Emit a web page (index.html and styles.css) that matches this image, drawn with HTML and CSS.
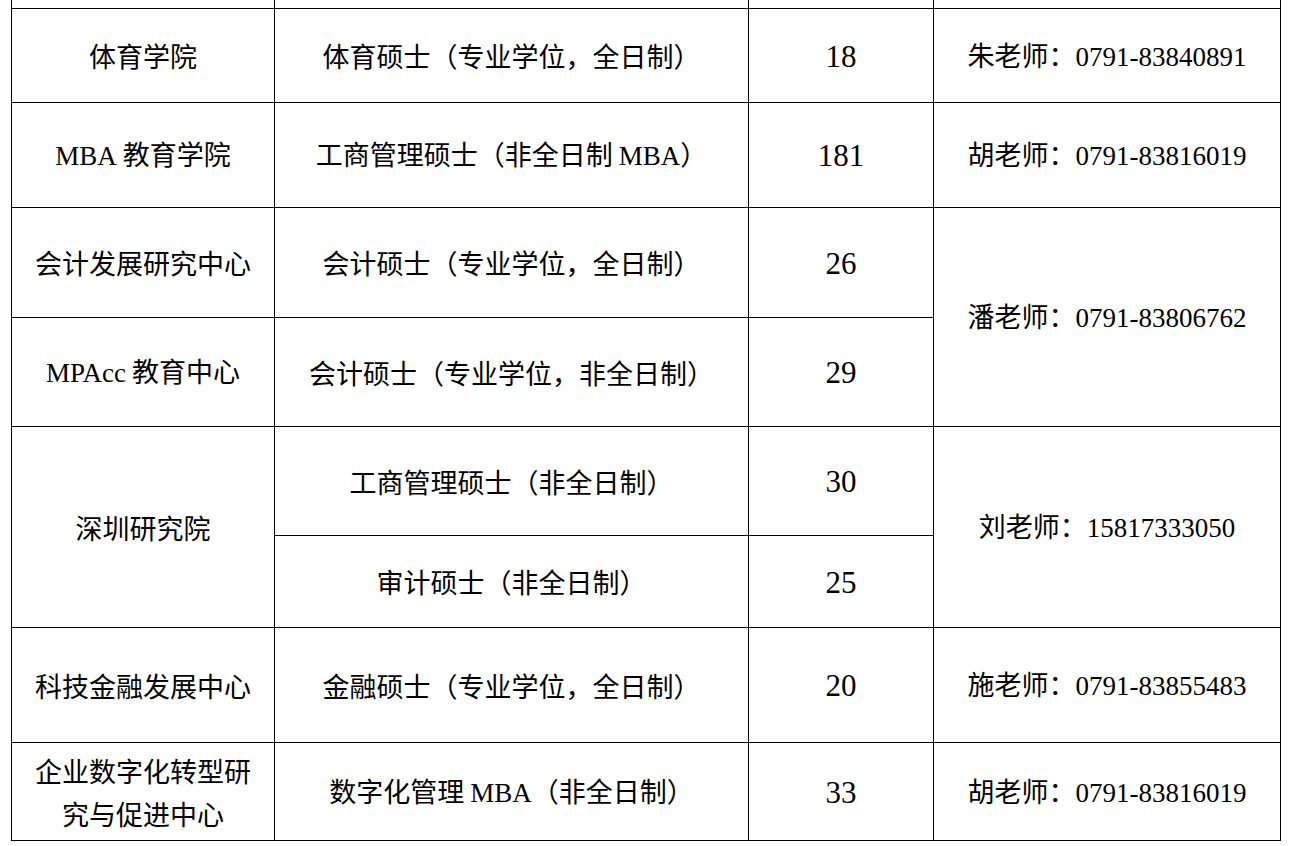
FILE: index.html
```html
<!DOCTYPE html>
<html lang="zh-CN">
<head>
<meta charset="utf-8">
<title>招生信息</title>
<link rel="stylesheet" href="styles.css">
</head>
<body>
<div class="page">
<table class="grid">
  <colgroup>
    <col class="c1"><col class="c2"><col class="c3"><col class="c4">
  </colgroup>
  <tbody>
    <tr class="r0"><td></td><td></td><td></td><td></td></tr>
    <tr class="r1">
      <td>体育学院</td>
      <td>体育硕士（专业学位，全日制）</td>
      <td class="num"><span class="lat">18</span></td>
      <td>朱老师：<span class="lat">0791-83840891</span></td>
    </tr>
    <tr class="r2">
      <td><span class="lat">MBA</span> 教育学院</td>
      <td>工商管理硕士（非全日制 <span class="lat">MBA</span>）</td>
      <td class="num"><span class="lat">181</span></td>
      <td>胡老师：<span class="lat">0791-83816019</span></td>
    </tr>
    <tr class="r3">
      <td>会计发展研究中心</td>
      <td>会计硕士（专业学位，全日制）</td>
      <td class="num"><span class="lat">26</span></td>
      <td rowspan="2">潘老师：<span class="lat">0791-83806762</span></td>
    </tr>
    <tr class="r4">
      <td><span class="lat">MPAcc</span> 教育中心</td>
      <td>会计硕士（专业学位，非全日制）</td>
      <td class="num"><span class="lat">29</span></td>
    </tr>
    <tr class="r5">
      <td rowspan="2">深圳研究院</td>
      <td>工商管理硕士（非全日制）</td>
      <td class="num"><span class="lat">30</span></td>
      <td rowspan="2">刘老师：<span class="lat">15817333050</span></td>
    </tr>
    <tr class="r6">
      <td>审计硕士（非全日制）</td>
      <td class="num"><span class="lat">25</span></td>
    </tr>
    <tr class="r7">
      <td>科技金融发展中心</td>
      <td>金融硕士（专业学位，全日制）</td>
      <td class="num"><span class="lat">20</span></td>
      <td>施老师：<span class="lat">0791-83855483</span></td>
    </tr>
    <tr class="r8">
      <td class="wrap">企业数字化转型研究与促进中心</td>
      <td>数字化管理 <span class="lat">MBA</span>（非全日制）</td>
      <td class="num"><span class="lat">33</span></td>
      <td>胡老师：<span class="lat">0791-83816019</span></td>
    </tr>
  </tbody>
</table>
</div>
</body>
</html>
```

FILE: styles.css
```css
html, body {
  margin: 0;
  padding: 0;
  background: #ffffff;
}

.page {
  padding-left: 11px;
}

.grid {
  border-collapse: collapse;
  table-layout: fixed;
  width: 1269px;
  font-family: "Noto Sans CJK SC", sans-serif;
  font-size: 27px;
  color: #000;
}

.c1 { width: 263px; }
.c2 { width: 474px; }
.c3 { width: 185px; }
.c4 { width: 347px; }

.grid td {
  border: 1px solid #000;
  text-align: center;
  vertical-align: middle;
  padding: 0 12px;
  line-height: 43px;
  white-space: nowrap;
}

.grid td.wrap {
  white-space: normal;
  padding: 0 18px;
}

.lat {
  font-family: "Liberation Serif", "Times New Roman", serif;
  font-size: 27px;
}

.grid td.num .lat {
  font-size: 31px;
}

.r0 td {
  border-top: none;
  height: 8px;
  line-height: 0;
  padding: 0;
}

.r1 { height: 94px; }
.r2 { height: 105px; }
.r3 { height: 110px; }
.r4 { height: 109px; }
.r5 { height: 109px; }
.r6 { height: 92px; }
.r7 { height: 115px; }
.r8 { height: 98px; }
```
